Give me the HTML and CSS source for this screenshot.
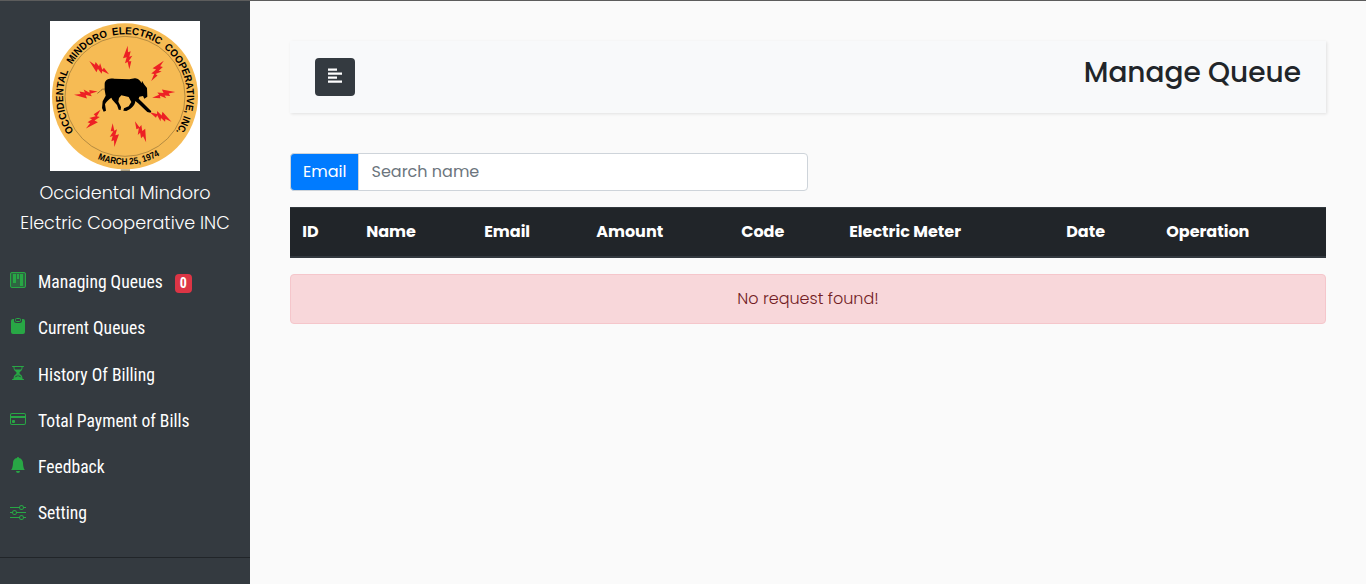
FILE: index.html
```
<!DOCTYPE html>
<html lang="en">
<head>
<meta charset="utf-8">
<title>Manage Queue</title>
<link rel="stylesheet" href="styles.css">
</head>
<body>
<div class="wrapper">
  <aside class="sidebar">
    <header class="brand">
      <svg class="logo" viewBox="30 33 450 450" role="img" aria-label="Cooperative seal">
        <defs>
          <path id="ring" d="M104.500 368.300A186 186 0 0 1 255 73A186 186 0 0 1 403.500 370.900"/>
          <path id="foot" d="M172 446.600A205 205 0 0 0 372 427.500"/>
          <path id="bolt" d="M1-35-13 3-2 0-7 18 1 14 6 36 12 12 4 12 15-5 6-2 10-18 2-15Z"/>
        </defs>
        <path fill="#fff" d="M30 33h450v450H30z"/>
        <circle cx="255" cy="259" r="219" fill="#f6bb54"/>
        <circle cx="255" cy="259" r="180" fill="none" stroke="#7a6030" stroke-width="1.6"/>
        <path d="M242 478h28v5h-28z" fill="#b0a385"/>
        <g class="seal-text">
          <text><textPath href="#ring" startOffset="5" textLength="190" lengthAdjust="spacingAndGlyphs">OCCIDENTAL</textPath></text>
          <text><textPath href="#ring" startOffset="217" textLength="140" lengthAdjust="spacingAndGlyphs">MINDORO</textPath></text>
          <text><textPath href="#ring" startOffset="371" textLength="148" lengthAdjust="spacingAndGlyphs">ELECTRIC</textPath></text>
          <text><textPath href="#ring" startOffset="534" textLength="217" lengthAdjust="spacingAndGlyphs">COOPERATIVE,</textPath></text>
          <text><textPath href="#ring" startOffset="759" textLength="54" lengthAdjust="spacingAndGlyphs">INC.</textPath></text>
          <text class="date"><textPath href="#foot" startOffset="1" textLength="194" lengthAdjust="spacingAndGlyphs">MARCH 25, 1974</textPath></text>
        </g>
        <g fill="#ed2024">
          <use href="#bolt" transform="translate(262 142)"/>
          <use href="#bolt" transform="translate(350 180) rotate(36)"/>
          <use href="#bolt" transform="translate(371 251) rotate(80)"/>
          <use href="#bolt" transform="translate(364 318) rotate(118)"/>
          <use href="#bolt" transform="translate(305 364) rotate(156)"/>
          <use href="#bolt" transform="translate(224 376) rotate(180)"/>
          <use href="#bolt" transform="translate(162 330) rotate(-138)"/>
          <use href="#bolt" transform="translate(137 253) rotate(-94)"/>
          <use href="#bolt" transform="translate(175 175) rotate(-52)"/>
        </g>
        <path d="M172 250C184 244 182 236 194 237" fill="none" stroke="#6b4a20" stroke-width="2"/>
        <path d="M194 221C195 208 210 205 222 206L268 208 284 205C294 204 300 211 305 220L306 212 312 223 321 234 322 260 313 266 309 258 298 260 296 266 306 276 334 304 331 308 322 306 296 281 286 273C285 285 276 296 259 303L250 302 252 295 266 289 274 276 266 261 244 256 237 264 235 275 243 291 242 300 236 299 231 285 217 269 214 263C206 269 197 276 195 283L198 302 191 305 186 294 188 274 197 257 194 240Z"/>
      </svg>
      <h1 class="brand-name"><span>Occidental Mindoro</span><span>Electric Cooperative INC</span></h1>
    </header>
    <ul class="menu">
      <li><svg class="icon" viewBox="0 0 16 16"><rect width="16" height="16" rx="2" opacity=".4"/><rect x=".5" y=".5" width="15" height="15" rx="1.500" fill="none" stroke="currentColor"/><path d="M3 2h3v9H3zM7 2h2v5H7zM10 2h3v12h-3z"/></svg><a class="label">Managing Queues</a><span class="badge">0</span></li>
      <li><svg class="icon" viewBox="0 0 16 16"><path d="M4 1H3a2 2 0 0 0-2 2v11a2 2 0 0 0 2 2h10a2 2 0 0 0 2-2V3a2 2 0 0 0-2-2h-1v1.500A2.500 2.500 0 0 1 9.500 5h-3A2.500 2.500 0 0 1 4 2.500z"/><rect x="5.500" y=".5" width="5" height="3" rx="1" fill="none" stroke="currentColor"/></svg><a class="label">Current Queues</a></li>
      <li><svg class="icon" viewBox="0 0 16 16"><path fill-rule="evenodd" d="M2 1.500a.5.5 0 0 1 .5-.5h11a.5.5 0 0 1 0 1h-1v1a4.500 4.500 0 0 1-2.557 4.060c-.290.139-.443.377-.443.590v.700c0 .213.154.451.443.590A4.500 4.500 0 0 1 12.500 13v1h1a.5.5 0 0 1 0 1h-11a.5.5 0 1 1 0-1h1v-1a4.500 4.500 0 0 1 2.557-4.060c.290-.139.443-.377.443-.590v-.700c0-.213-.154-.451-.443-.590A4.500 4.500 0 0 1 3.500 3V2h-1a.5.5 0 0 1-.5-.5zM4.500 2v1c0 .540.120 1.050.340 1.500h6.320c.220-.450.340-.960.340-1.500V2zM7.500 9.300c0 .701-.478 1.236-1.011 1.492A3.500 3.500 0 0 0 4.500 13s.866-1.299 3-1.480zM8.500 9.300c0 .701.478 1.236 1.011 1.492A3.500 3.500 0 0 1 11.500 13s-.866-1.299-3-1.480z"/></svg><a class="label">History Of Billing</a></li>
      <li><svg class="icon" viewBox="0 0 16 16"><path fill-rule="evenodd" d="M0 4a2 2 0 0 1 2-2h12a2 2 0 0 1 2 2v8a2 2 0 0 1-2 2H2a2 2 0 0 1-2-2zm2-1a1 1 0 0 0-1 1v1h14V4a1 1 0 0 0-1-1zm13 4H1v5a1 1 0 0 0 1 1h12a1 1 0 0 0 1-1z"/><path d="M2 10a1 1 0 0 1 1-1h1a1 1 0 0 1 1 1v1a1 1 0 0 1-1 1H3a1 1 0 0 1-1-1z"/></svg><a class="label">Total Payment of Bills</a></li>
      <li><svg class="icon" viewBox="0 0 16 16"><path d="M8 16a2 2 0 0 0 2-2H6a2 2 0 0 0 2 2zm.995-14.901a1 1 0 1 0-1.990 0A5 5 0 0 0 3 6c0 1.098-.5 6-2 7h14c-1.500-1-2-5.902-2-7 0-2.420-1.720-4.440-4.005-4.901z"/></svg><a class="label">Feedback</a></li>
      <li><svg class="icon" viewBox="0 0 16 16"><path fill-rule="evenodd" d="M11.500 2a1.500 1.500 0 1 0 0 3 1.500 1.500 0 0 0 0-3zM9.050 3a2.500 2.500 0 0 1 4.900 0H16v1h-2.050a2.500 2.500 0 0 1-4.900 0H0V3zM4.500 7a1.500 1.500 0 1 0 0 3 1.500 1.500 0 0 0 0-3zM2.050 8a2.500 2.500 0 0 1 4.900 0H16v1H6.950a2.500 2.500 0 0 1-4.900 0H0V8zm9.450 4a1.500 1.500 0 1 0 0 3 1.500 1.500 0 0 0 0-3zm-2.450 1a2.500 2.500 0 0 1 4.900 0H16v1h-2.050a2.500 2.500 0 0 1-4.900 0H0v-1z"/></svg><a class="label">Setting</a></li>
    </ul>
  </aside>
  <main class="content">
    <nav class="topbar">
      <button class="toggle" aria-label="Toggle sidebar"><svg width="14" height="16" viewBox="0 0 14 16"><path d="M0 .5h9v2.300H0zM0 4.500h14v2.300H0zM0 8.500h9v2.300H0zM0 12.500h14v2.300H0z"/></svg></button>
      <h3 class="title">Manage Queue</h3>
    </nav>
    <div class="search">
      <span class="prefix">Email</span>
      <input class="field" type="text" placeholder="Search name">
    </div>
    <table class="queue">
      <colgroup><col class="c1"><col class="c2"><col class="c3"><col class="c4"><col class="c5"><col class="c6"><col class="c7"><col class="c8"></colgroup>
      <thead><tr><th>ID</th><th>Name</th><th>Email</th><th>Amount</th><th>Code</th><th>Electric Meter</th><th>Date</th><th>Operation</th></tr></thead>
    </table>
    <div class="alert">No request found!</div>
  </main>
</div>
</body>
</html>
```
FILE: styles.css
```
* { box-sizing: border-box; }
body {
  margin: 0;
  background: #fafafa;
  color: #212529;
  font: 400 16px/24px Poppins, Inter, sans-serif;
  overflow: hidden;
}
.wrapper { display: flex; height: 584px; border-top: 1px solid #5c5c5c; }
.sidebar { width: 250px; flex: none; background: #343a40; color: #fff; }
.brand { padding: 20px 0 0; text-align: center; }
.logo { display: block; width: 150px; height: 150px; margin: 0 auto; }
.seal-text { font: 700 31px "Liberation Sans", sans-serif; }
.seal-text .date { font-size: 28px; }
.brand-name { margin: 7px 0 0; font-size: 17.6px; line-height: 30px; font-weight: 300; }
.brand-name span { display: block; }
.menu { list-style: none; margin: 0; padding: 21px 0 20.600px; border-bottom: 1px solid #212529; }
.menu li {
  display: flex;
  align-items: center;
  height: 46.300px;
  padding: 0 10px;
  font: 400 17.6px/26.4px "Roboto Condensed", Roboto, sans-serif;
}
.icon { width: 16px; height: 16px; margin: -4px 12px 0 0; color: #28a745; fill: currentColor; flex: none; }
.label { color: #fff; white-space: nowrap; }
.badge {
  margin: 3px 0 0 12px;
  padding: 3px 5px;
  border-radius: 4px;
  background: #dc3545;
  font-size: 14px;
  line-height: 13px;
  font-weight: 700;
}
.content { flex: 1; padding: 40px; }
.topbar {
  display: flex;
  justify-content: space-between;
  align-items: center;
  height: 72px;
  padding: 0 25px;
  background: #f8f9fa;
  box-shadow: 1px 1px 3px rgba(0, 0, 0, .1);
}
.toggle {
  display: flex;
  align-items: center;
  justify-content: center;
  width: 40px;
  height: 38px;
  padding: 0 0 2px;
  border: 0;
  border-radius: 4px;
  background: #343a40;
}
.toggle svg { fill: #fff; }
.title { margin: 0 0 8px; font-size: 28px; line-height: 34px; font-weight: 500; }
.search { display: flex; width: 518px; height: 38px; margin: 40px 0 16px; }
.prefix {
  width: 69px;
  padding: 6px 12px;
  border: 1px solid #ced4da;
  border-radius: 4px 0 0 4px;
  background: #007bff;
  color: #fff;
}
.field {
  flex: 1;
  margin-left: -1px;
  padding: 6px 12.500px;
  border: 1px solid #ced4da;
  border-radius: 0 4px 4px 0;
  background: #fff;
  font: inherit;
}
.field::placeholder { color: #6c757d; opacity: 1; }
.queue { width: 100%; table-layout: fixed; border-collapse: collapse; margin-bottom: 16px; background: #212529; color: #fff; }
.queue th {
  height: 49px;
  padding: 0 12px 0 12.200px;
  border-top: 1px solid #32383e;
  border-bottom: 2px solid #32383e;
  text-align: left;
  font-weight: 700;
  white-space: nowrap;
}
.c1 { width: 64px; }
.c2 { width: 118px; }
.c3 { width: 112px; }
.c4 { width: 145px; }
.c5 { width: 108px; }
.c6 { width: 217px; }
.c7 { width: 100px; }
.c8 { width: 172px; }
.alert {
  height: 50px;
  padding: 12px 20px;
  border: 1px solid #f5c6cb;
  border-radius: 4px;
  background: #f8d7da;
  color: #721c24;
  text-align: center;
  font-weight: 300;
}
```
